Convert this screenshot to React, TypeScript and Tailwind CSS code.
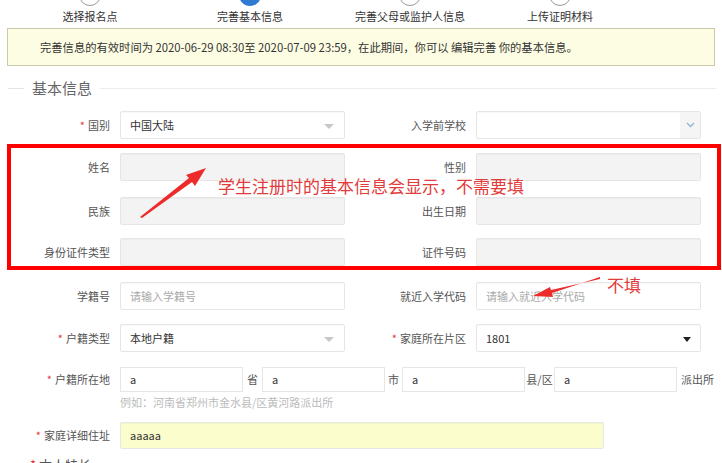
import React from 'react';

const font = { fontFamily: '"Noto Sans CJK SC", "Noto Sans", sans-serif' };

function Step({ n, label, active, w }: { n: number; label: string; active?: boolean; w: string }) {
  return (
    <div className={`${w} flex flex-col items-center`}>
      <div
        className={
          active
            ? 'mt-[-16px] flex h-[22px] w-[22px] items-center justify-center rounded-full bg-[#2f7bd4] text-[12px] text-white'
            : 'mt-[-16px] flex h-[22px] w-[22px] items-center justify-center rounded-full border border-[#9a9a9a] bg-white text-[12px] text-[#888]'
        }
      >
        {n}
      </div>
      <div className="mt-[2px] text-[11px] leading-[16px] text-[#333]">{label}</div>
    </div>
  );
}

function Label({ text, req, w = 'w-[120px]' }: { text: string; req?: boolean; w?: string }) {
  return (
    <div className={`${w} shrink-0 pr-[10px] text-right text-[11px] text-[#555]`}>
      {req && <span className="mr-[3px] text-[#e4393c]">*</span>}
      {text}
    </div>
  );
}

function Box({
  value,
  placeholder,
  disabled,
  caret,
  chevron,
  yellow,
  w = 'w-[225px]',
  h = 'h-[28px]',
}: {
  value?: string;
  placeholder?: string;
  disabled?: boolean;
  caret?: 'gray' | 'black';
  chevron?: boolean;
  yellow?: boolean;
  w?: string;
  h?: string;
}) {
  const bg = disabled ? 'bg-[#f3f3f3]' : yellow ? 'bg-[#fcfdcc]' : 'bg-white';
  return (
    <div
      className={`${w} ${h} ${bg} relative flex shrink-0 items-center rounded-[2px] border border-[#e6e6e6] px-[9px] text-[11px] shadow-[inset_0_1px_1px_rgba(0,0,0,0.03)]`}
    >
      {value ? (
        <span className="text-[#333]">{value}</span>
      ) : placeholder ? (
        <span className="text-[#aaa]">{placeholder}</span>
      ) : null}
      {caret === 'gray' && (
        <span className="absolute right-[10px] top-[12px] h-0 w-0 border-x-[5px] border-t-[5px] border-x-transparent border-t-[#c8c8c8]" />
      )}
      {caret === 'black' && (
        <span className="absolute right-[9px] top-[12px] h-0 w-0 border-x-[4px] border-t-[5px] border-x-transparent border-t-[#222]" />
      )}
      {chevron && (
        <span className="absolute right-0 top-0 flex h-full w-[20px] items-center justify-center bg-[#f5f5f5]">
          <svg width="9" height="6" viewBox="0 0 9 6">
            <path d="M1 1l3.5 3.5L8 1" fill="none" stroke="#8fb2d6" strokeWidth="1.3" />
          </svg>
        </span>
      )}
    </div>
  );
}

function Row({ children, mt }: { children: React.ReactNode; mt: string }) {
  return <div className={`${mt} flex items-center`}>{children}</div>;
}

function Seg({ value }: { value: string }) {
  return (
    <div className="flex h-[25px] w-[123px] shrink-0 items-center border border-[#e6e6e6] px-[9px] text-[#333]">
      {value}
    </div>
  );
}

export default function App() {
  return (
    <div className="relative h-[463px] w-[722px] overflow-hidden bg-white" style={font}>
      {/* steps */}
      <div className="flex h-[28px] pl-[10px]">
        <Step n={1} label="选择报名点" w="w-[160px]" />
        <Step n={2} label="完善基本信息" active w="w-[160px]" />
        <Step n={3} label="完善父母或监护人信息" w="w-[160px]" />
        <Step n={4} label="上传证明材料" w="w-[140px]" />
      </div>

      {/* notice */}
      <div className="mx-[7px] flex h-[38px] items-center border border-[#cbc9a9] bg-[#fdfde3] pl-[32px] text-[11.3px] text-[#333]">
        完善信息的有效时间为 2020-06-29 08:30至 2020-07-09 23:59，在此期间，你可以 编辑完善 你的基本信息。
      </div>

      {/* section title */}
      <div className="mt-[12px] flex items-center pl-[8px] pr-[6px]">
        <div className="h-px w-[16px] bg-[#e3e3e3]" />
        <div className="px-[8px] text-[15px] leading-[20px] text-[#666]">基本信息</div>
        <div className="h-px flex-1 bg-[#ececec]" />
      </div>

      {/* rows */}
      <Row mt="mt-[13px]">
        <Label text="国别" req />
        <Box value="中国大陆" caret="gray" />
        <Label text="入学前学校" w="w-[131px]" />
        <Box chevron />
      </Row>
      <Row mt="mt-[14px]">
        <Label text="姓名" />
        <Box disabled />
        <Label text="性别" w="w-[131px]" />
        <Box disabled />
      </Row>
      <Row mt="mt-[16px]">
        <Label text="民族" />
        <Box disabled />
        <Label text="出生日期" w="w-[131px]" />
        <Box disabled />
      </Row>
      <Row mt="mt-[13px]">
        <Label text="身份证件类型" />
        <Box disabled />
        <Label text="证件号码" w="w-[131px]" />
        <Box disabled />
      </Row>
      <Row mt="mt-[16px]">
        <Label text="学籍号" />
        <Box placeholder="请输入学籍号" />
        <Label text="就近入学代码" w="w-[131px]" />
        <Box placeholder="请输入就近入学代码" />
      </Row>
      <Row mt="mt-[14px]">
        <Label text="户籍类型" req />
        <Box value="本地户籍" caret="gray" />
        <Label text="家庭所在片区" req w="w-[131px]" />
        <Box value="1801" caret="black" />
      </Row>
      <div className="mt-[15px] flex h-[25px] items-center text-[11px] text-[#555]">
        <Label text="户籍所在地" req />
        <Seg value="a" />
        <span className="w-[19px] shrink-0 text-center">省</span>
        <Seg value="a" />
        <span className="w-[17px] shrink-0 text-center">市</span>
        <Seg value="a" />
        <span className="w-[29px] shrink-0 text-center">县/区</span>
        <Seg value="a" />
        <span className="pl-[4px]">派出所</span>
      </div>
      <div className="mt-[3px] pl-[120px] text-[11px] leading-[14px] text-[#bbb]">
        例如：河南省郑州市金水县/区黄河路派出所
      </div>
      <Row mt="mt-[13px]">
        <Label text="家庭详细住址" req />
        <Box value="aaaaa" yellow w="w-[484px]" h="h-[27px]" />
      </Row>
      <div className="mt-[7px] pl-[30px] text-[13px] leading-[18px] text-[#555]">
        <span className="mr-[3px] text-[#e4393c]">*</span>本人特长
      </div>

      {/* annotation overlay */}
      <div className="pointer-events-none absolute left-[7px] top-[144px] h-[126px] w-[714px] border-[4px] border-[#ff0000]" />
      <div className="pointer-events-none absolute left-[218px] top-[176px] text-[17px] leading-[19px] text-[#e23b3b]">
        学生注册时的基本信息会显示，不需要填
      </div>
      <div className="pointer-events-none absolute left-[607px] top-[275px] text-[17px] leading-[19px] text-[#e23b3b]">
        不填
      </div>
      <svg className="pointer-events-none absolute left-0 top-0" width="722" height="463">
        <polygon points="140,217 189,178 186,175 206,168 195,186 192,182 142,218" fill="#ee2b2b" />
        <polygon points="600,277 552,293 553,297 533,296 550,287 551,290 600,279" fill="#ee2b2b" />
      </svg>
    </div>
  );
}
